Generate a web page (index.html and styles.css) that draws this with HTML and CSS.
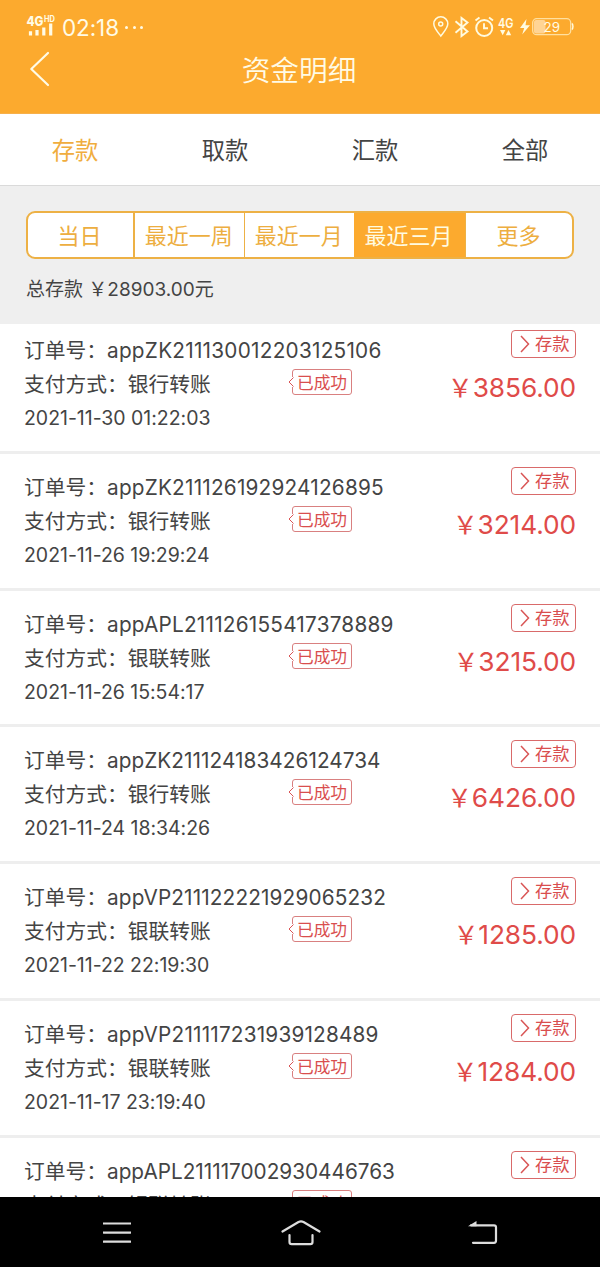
FILE: index.html
```
<!DOCTYPE html>
<html lang="zh-CN">
<head>
<meta charset="utf-8">
<title>资金明细</title>
<link rel="stylesheet" href="styles.css">
</head>
<body>
<div class="screen">
  <header class="header">
    <div class="status">
      <div class="status-left">
        <svg class="signal" width="30" height="22" viewBox="0 0 30 22">
          <text x="0.5" y="11" class="net" textLength="17" lengthAdjust="spacingAndGlyphs">4G</text>
          <text x="18" y="7.2" class="hd" textLength="11" lengthAdjust="spacingAndGlyphs">HD</text>
          <path d="M4.500 16.2v4.3M11 15v5.5M17.800 12.5v8M24.700 8.5v12" stroke="#fffbe6" stroke-width="3.2"/>
        </svg>
        <span class="clock">02:18</span>
        <span class="dots"><i></i><i></i><i></i></span>
      </div>
      <svg class="status-right" width="144" height="24" viewBox="432 15 144 24" fill="none" stroke="#fffbe0" stroke-width="1.5">
        <path d="M440.8 36C438 32.5 433.8 28 433.8 23.800a7 7 0 0 1 14 0C447.800 28 443.500 32.500 440.800 36z"/>
        <circle cx="440.700" cy="24" r="2"/>
        <path d="M455.500 21.200l12 10.300-6 4.500v-18l6 4.500-12 10.300" stroke-width="1.900"/>
        <circle cx="484.200" cy="28" r="8" stroke-width="2"/>
        <path d="M484 23.200v5h4M475.500 20.500l4-3M493 20.500l-4-3" stroke-width="1.900"/>
        <text x="498" y="27.500" class="net4" textLength="15.500" lengthAdjust="spacingAndGlyphs">4G</text>
        <path d="M500 30h5.400l-2.700 5.200zM505.800 35.200h5.400l-2.700-5.200z" fill="#fffbe0" stroke="none"/>
        <path d="M526.500 19l-6.500 9h4.200l-2 6.500 7.800-9.300h-4.500z" fill="#fffbe0" stroke="none"/>
        <rect x="534" y="20" width="11.500" height="13.500" rx="2" fill="#ffd494" stroke="none"/>
        <rect x="532.700" y="18.700" width="38" height="16" rx="4" stroke="#ffe0a0" stroke-width="1.300"/>
        <path d="M571.800 23.500c1.500.5 1.500 5.500 0 6" stroke-width="1.500"/>
        <text x="543.500" y="31.600" class="battery" textLength="16.500" lengthAdjust="spacingAndGlyphs">29</text>
      </svg>
    </div>
    <div class="titlebar">
      <svg class="back" width="22" height="36" viewBox="0 0 22 36"><path d="M19 2L2.300 18 19 34" fill="none" stroke="#fffbe6" stroke-width="2.200" stroke-linecap="round" stroke-linejoin="round"/></svg>
      <h1 class="title">资金明细</h1>
    </div>
  </header>

  <nav class="tabs">
    <a class="tab tab-on">存款</a><a class="tab">取款</a><a class="tab">汇款</a><a class="tab">全部</a>
  </nav>

  <section class="filter">
    <div class="segments">
      <span class="seg first">当日</span><span class="seg week">最近一周</span><span class="seg month">最近一月</span><span class="seg active">最近三月</span><span class="seg last">更多</span>
    </div>
    <p class="total"><span>总存款</span> <span class="sum">￥28903.00</span>元</p>
  </section>

  <main class="list">
    <div class="rows">
      <article class="row">
        <div class="info">
          <p class="order">订单号：<span class="id w1">appZK211130012203125106</span></p>
          <p class="pay">支付方式：银行转账</p>
          <time class="date">2021-11-30 01:22:03</time>
        </div>
        <span class="state"><svg width="6" height="10" viewBox="0 0 6 10"><path d="M5.500.5L1 5l4.500 4.500"/></svg>已成功</span>
        <div class="side">
          <span class="kind"><svg width="10" height="18" viewBox="0 0 10 18"><path d="M1 1l7.500 8L1 17"/></svg>存款</span>
          <strong class="amount"><span class="yen">￥</span>3856.00</strong>
        </div>
      </article>
      <article class="row">
        <div class="info">
          <p class="order">订单号：<span class="id w2">appZK211126192924126895</span></p>
          <p class="pay">支付方式：银行转账</p>
          <time class="date">2021-11-26 19:29:24</time>
        </div>
        <span class="state"><svg width="6" height="10" viewBox="0 0 6 10"><path d="M5.500.5L1 5l4.500 4.500"/></svg>已成功</span>
        <div class="side">
          <span class="kind"><svg width="10" height="18" viewBox="0 0 10 18"><path d="M1 1l7.500 8L1 17"/></svg>存款</span>
          <strong class="amount"><span class="yen">￥</span>3214.00</strong>
        </div>
      </article>
      <article class="row">
        <div class="info">
          <p class="order">订单号：<span class="id w3">appAPL211126155417378889</span></p>
          <p class="pay">支付方式：银联转账</p>
          <time class="date">2021-11-26 15:54:17</time>
        </div>
        <span class="state"><svg width="6" height="10" viewBox="0 0 6 10"><path d="M5.500.5L1 5l4.500 4.500"/></svg>已成功</span>
        <div class="side">
          <span class="kind"><svg width="10" height="18" viewBox="0 0 10 18"><path d="M1 1l7.500 8L1 17"/></svg>存款</span>
          <strong class="amount"><span class="yen">￥</span>3215.00</strong>
        </div>
      </article>
      <article class="row">
        <div class="info">
          <p class="order">订单号：<span class="id w4">appZK211124183426124734</span></p>
          <p class="pay">支付方式：银行转账</p>
          <time class="date">2021-11-24 18:34:26</time>
        </div>
        <span class="state"><svg width="6" height="10" viewBox="0 0 6 10"><path d="M5.500.5L1 5l4.500 4.500"/></svg>已成功</span>
        <div class="side">
          <span class="kind"><svg width="10" height="18" viewBox="0 0 10 18"><path d="M1 1l7.500 8L1 17"/></svg>存款</span>
          <strong class="amount"><span class="yen">￥</span>6426.00</strong>
        </div>
      </article>
      <article class="row">
        <div class="info">
          <p class="order">订单号：<span class="id w5">appVP211122221929065232</span></p>
          <p class="pay">支付方式：银联转账</p>
          <time class="date">2021-11-22 22:19:30</time>
        </div>
        <span class="state"><svg width="6" height="10" viewBox="0 0 6 10"><path d="M5.500.5L1 5l4.500 4.500"/></svg>已成功</span>
        <div class="side">
          <span class="kind"><svg width="10" height="18" viewBox="0 0 10 18"><path d="M1 1l7.500 8L1 17"/></svg>存款</span>
          <strong class="amount"><span class="yen">￥</span>1285.00</strong>
        </div>
      </article>
      <article class="row">
        <div class="info">
          <p class="order">订单号：<span class="id w6">appVP211117231939128489</span></p>
          <p class="pay">支付方式：银联转账</p>
          <time class="date">2021-11-17 23:19:40</time>
        </div>
        <span class="state"><svg width="6" height="10" viewBox="0 0 6 10"><path d="M5.500.5L1 5l4.500 4.500"/></svg>已成功</span>
        <div class="side">
          <span class="kind"><svg width="10" height="18" viewBox="0 0 10 18"><path d="M1 1l7.500 8L1 17"/></svg>存款</span>
          <strong class="amount"><span class="yen">￥</span>1284.00</strong>
        </div>
      </article>
      <article class="row">
        <div class="info">
          <p class="order">订单号：<span class="id w7">appAPL211117002930446763</span></p>
          <p class="pay">支付方式：银联转账</p>
        </div>
        <span class="state"><svg width="6" height="10" viewBox="0 0 6 10"><path d="M5.500.5L1 5l4.500 4.500"/></svg>已成功</span>
        <div class="side">
          <span class="kind"><svg width="10" height="18" viewBox="0 0 10 18"><path d="M1 1l7.500 8L1 17"/></svg>存款</span>
        </div>
      </article>
    </div>
  </main>

  <footer class="navbar">
    <svg width="28" height="22" viewBox="0 0 28 22"><path d="M.5 1.500h27M.5 10.600h27M.5 19.700h27"/></svg>
    <svg class="home" width="40" height="26" viewBox="0 0 40 26"><path d="M1.500 11.500L17.500 2q2.500-1.200 5 0l16 9.500M8.500 15v7q0 2.200 2.200 2.200h18.600q2.200 0 2.200-2.200v-7"/></svg>
    <svg width="30" height="25" viewBox="0 0 30 25"><path d="M5 22.800h21q2 0 2-2v-13.500q0-2-2-2H3"/><path class="tip" d="M0 6.300L8.500 1v5.300z"/></svg>
  </footer>
</div>
</body>
</html>
```
FILE: styles.css
```
* { box-sizing: border-box; }
body { margin: 0; background: #fff; font-family: Inter, "Noto Sans CJK SC", sans-serif; font-weight: 400; color: #444; }
p, h1 { margin: 0; font-weight: inherit; }
svg { display: block; flex: none; }
.screen { width: 600px; height: 1267px; display: flex; flex-direction: column; overflow: hidden; }

.header { height: 114px; flex: none; background: #fcaa2e; color: #fffbe6; border-bottom: 1px solid #f7b04a; }
.status { height: 50px; display: flex; justify-content: space-between; padding: 15px 24px 0 26px; }
.status-left { display: flex; height: 24px; }
.net, .hd, .net4, .battery { font-family: Inter, sans-serif; stroke: none; fill: #fffbe6; }
.net { font-size: 13.5px; font-weight: 800; }
.hd { font-size: 8.5px; font-weight: 700; }
.net4 { font-size: 13.3px; font-weight: 600; }
.battery { font-size: 13px; }
.clock { margin-left: 6px; font-size: 22.5px; line-height: 26px; width: 58px; letter-spacing: -.1px; white-space: nowrap; }
.dots { display: flex; gap: 4.600px; padding: 11px 0 0 5px; }
.dots i { width: 3px; height: 3px; border-radius: 50%; background: #fffbe6; }
.titlebar { display: flex; height: 44px; padding-left: 29px; }
.back { margin-top: 1px; }
.title { width: 496px; text-align: center; font-size: 28.700px; line-height: 42px; font-weight: 350; }

.tabs { height: 72px; flex: none; display: flex; border-bottom: 1px solid #dadada; }
.tab { flex: 1; text-align: center; font-size: 23.300px; line-height: 74px; }
.tab-on { color: #f0ad3e; }

.filter { height: 138px; flex: none; background: #efefef; padding: 25px 26px 0; }
.segments { height: 48px; display: flex; border: 2px solid #edb145; border-radius: 9px; background: #fff; overflow: hidden; }
.seg { font-size: 22px; line-height: 46px; text-align: center; color: #edae40; white-space: nowrap; border-right: 1px solid #edb145; padding-right: 1px; }
.first { width: 107px; border-right-width: 2px; padding-right: 2px; }
.week, .month { width: 109.500px; }
.month { border-right: 0; }
.active { width: 112px; margin: -1px 0; line-height: 48px; background: #fcaa2e; color: #fffbe0; padding-right: 2px; }
.last { flex: 1; border: 0; }
.total { margin-top: 17px; font-size: 19px; line-height: 28px; white-space: nowrap; }

.list { flex: 1; min-height: 0; overflow: hidden; }
.rows { margin-top: -6.700px; }
.row { height: 136.720px; display: flex; position: relative; padding: 0 24px; border-bottom: 3px solid #eee; }
.info { width: 264px; padding-top: 17px; white-space: nowrap; font-size: 20.750px; }
.order, .pay { height: 34px; line-height: 34px; }
.w1 { letter-spacing: .25px; }
.w2 { letter-spacing: .21px; }
.w3 { letter-spacing: .22px; }
.w4 { letter-spacing: .06px; }
.w5 { letter-spacing: .14px; }
.w6 { letter-spacing: .19px; }
.date { display: block; font-size: 19.500px; line-height: 32px; letter-spacing: -.030px; }
.state { width: 60px; height: 26px; margin-top: 52px; margin-left: 4px; border: 1px solid #d98080; border-radius: 3px; text-align: center; color: #d94e4e; font-size: 16.700px; line-height: 26px; white-space: nowrap; position: relative; }
.state svg { position: absolute; left: -5px; top: 7px; background: #fff; }
.state path, .kind path { fill: none; stroke: #d95555; stroke-width: 1; }
.side { flex: 1; display: flex; flex-direction: column; align-items: flex-end; padding-top: 13px; }
.kind { width: 65px; height: 28px; border: 1px solid #d96a6a; border-radius: 4px; display: flex; align-items: center; gap: 5px; padding-left: 8px; color: #d94e4e; font-size: 17.300px; line-height: 26px; }
.kind path { stroke-width: 1.500; }
.amount { margin-top: 12px; font-size: 26.300px; line-height: 36px; font-weight: 400; letter-spacing: -.1px; color: #df4b49; white-space: nowrap; }
.yen { font-size: 25px; line-height: 1; }

.navbar { height: 70px; flex: none; background: #000; display: flex; justify-content: space-between; align-items: center; padding: 1px 102px 0 103px; }
.home { margin-left: 2px; }
.navbar path { fill: none; stroke: #ddd; stroke-width: 2.200; stroke-linecap: round; stroke-linejoin: round; }
.navbar .tip { fill: #ddd; stroke: none; }
```
